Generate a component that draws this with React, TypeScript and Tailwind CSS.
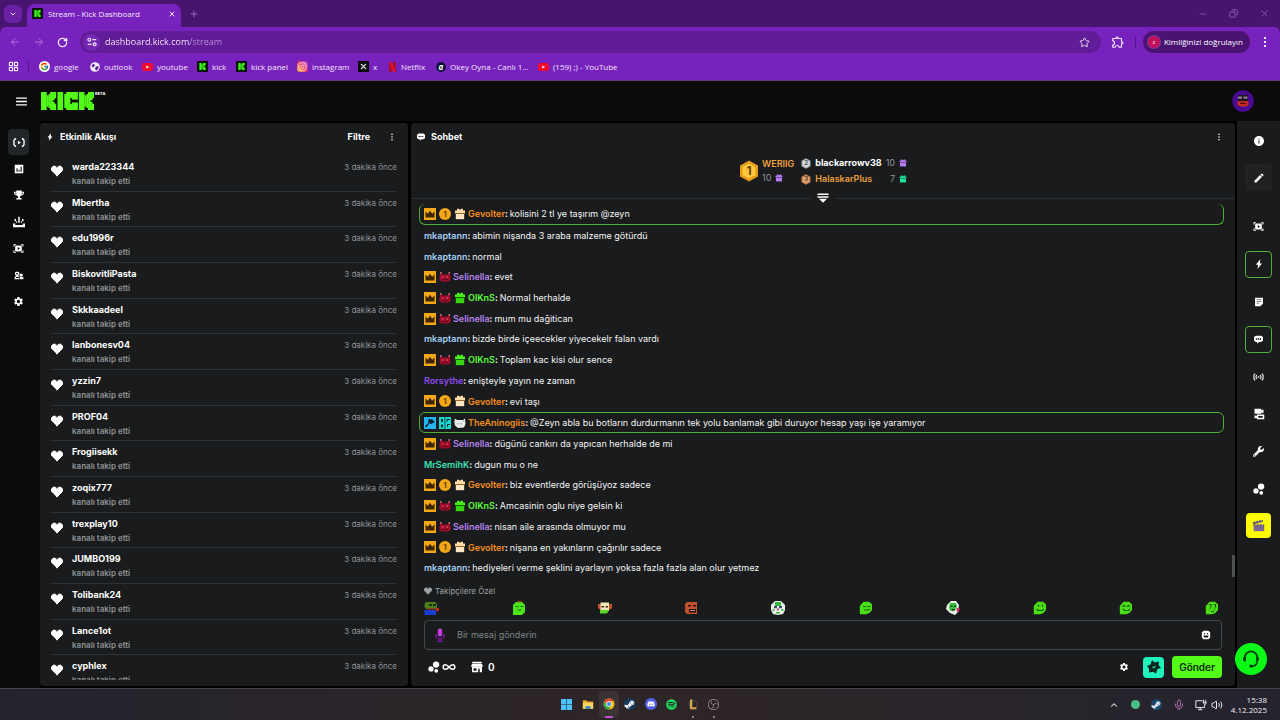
import type { ReactNode } from "react";
import {
  ArrowLeft,
  ArrowRight,
  ChevronDown,
  ChevronUp,
  Copy,
  Minus,
  Plus,
  RotateCw,
  Star,
  X,
  Infinity as InfinityIcon,
  Mic,
  Volume2,
  LayoutGrid,
} from "lucide-react";
import { FaDiscord, FaInstagram, FaSpotify, FaSteamSymbol, FaTrophy, FaWrench } from "react-icons/fa";
import { FcGoogle } from "react-icons/fc";
import { MdSettings, MdEdit, MdInfo, MdOutlineExtension } from "react-icons/md";
import { SiObsstudio } from "react-icons/si";

type IconProps = { className?: string };

const KBlocks = () => (
  <>
    <rect x="0" y="0" width="3" height="9" />
    <rect x="2.9" y="1.6" width="1.2" height="5.8" />
    <rect x="4" y="1" width="1.1" height="7" />
    <rect x="4.8" y="0" width="3.2" height="3.1" />
    <rect x="5" y="2.9" width="2.2" height="1.2" />
    <rect x="5" y="3.9" width="1.2" height="1.2" />
    <rect x="5" y="4.9" width="2.2" height="1.2" />
    <rect x="4.8" y="5.9" width="3.2" height="3.1" />
  </>
);

const KickMark = ({ className }: IconProps) => (
  <svg viewBox="0 0 14 14" className={className} aria-hidden="true">
    <rect width="14" height="14" rx="1" fill="#07140a" />
    <g transform="translate(3 2.5)" fill="#3df51a">
      <KBlocks />
    </g>
  </svg>
);

const KickLogo = () => (
  <svg viewBox="0 0 28 9" preserveAspectRatio="none" className="h-[18px] w-[53px]" fill="#53fc18" role="img" aria-label="Kick">
    <KBlocks />
    <rect x="8.7" y="0" width="3" height="9" />
    <g transform="translate(12.3 0)">
      <rect x="0" y="1" width="3.2" height="7" />
      <rect x="1" y="0" width="6.2" height="3" />
      <rect x="1" y="6" width="6.2" height="3" />
      <rect x="4" y="2.5" width="3.2" height="1.3" />
      <rect x="4" y="5.2" width="3.2" height="1.3" />
    </g>
    <g transform="translate(20 0)">
      <KBlocks />
    </g>
  </svg>
);

const Dots = ({ className }: IconProps) => (
  <svg viewBox="0 0 4 12" className={className} fill="currentColor" aria-hidden="true">
    <rect x="1" y="1" width="2" height="2" />
    <rect x="1" y="5" width="2" height="2" />
    <rect x="1" y="9" width="2" height="2" />
  </svg>
);

const Bolt = ({ className }: IconProps) => (
  <svg viewBox="0 0 12 16" className={className} fill="currentColor" aria-hidden="true">
    <path d="M8 .5 1 9h3.500L3.500 15.500 11 7H7.500z" />
  </svg>
);

const Heart = ({ className }: IconProps) => (
  <svg viewBox="0 0 12 12" className={className} fill="currentColor" aria-hidden="true">
    <path d="M1 1.5h1V.8h2.6v.8h.9v.9h1v-.9h.9V.8H10v.7h1v1h1v3.2h-1v1.2h-1v1H9v1H8v1H7v1H6.5L6 11.5 5 10.7v-1H4v-1H3v-1H2v-1H1V5.7H0V2.5h1z" />
  </svg>
);

const Bubble = ({ className }: IconProps) => (
  <svg viewBox="0 0 16 14" className={className} aria-hidden="true">
    <path d="M4 1h8l3 2v6l-3 2H9l-3 2.5V11H4L1 9V3z" fill="currentColor" />
    <path d="M4 5.2h2v2H4zM7 5.2h2v2H7zM10 5.2h2v2h-2z" fill="#191b1c" />
  </svg>
);

const Broadcast = ({ className }: IconProps) => (
  <svg viewBox="0 0 16 12" className={className} fill="none" stroke="currentColor" strokeWidth="1.8" aria-hidden="true">
    <path d="M4.2 1H3L1.3 3v6L3 11h1.2M11.8 1H13l1.7 2v6L13 11h-1.2" />
    <path d="M6.5 3.5 10.5 6l-4 2.5z" fill="currentColor" stroke="none" />
  </svg>
);

const Antenna = ({ className }: IconProps) => (
  <svg viewBox="0 0 16 12" className={className} fill="none" stroke="currentColor" strokeWidth="1.6" aria-hidden="true">
    <path d="M3 1 1.2 3v6L3 11M13 1l1.8 2v6L13 11M5.6 3 4.4 4.5v3L5.6 9M10.4 3l1.2 1.5v3L10.4 9" />
    <path d="M7 4.8h2v2.4H7z" fill="currentColor" stroke="none" />
  </svg>
);

const Chart = ({ className }: IconProps) => (
  <svg viewBox="0 0 14 14" className={className} aria-hidden="true">
    <path d="M1 1h12v12H1z" fill="currentColor" />
    <path d="M3.5 6h1.5v5H3.5zM6.3 8h1.4v3H6.3zM9.2 4h1.6v7H9.2z" fill="#0a0b0b" />
  </svg>
);

const Drops = ({ className }: IconProps) => (
  <svg viewBox="0 0 16 16" className={className} fill="currentColor" aria-hidden="true">
    <path d="M7 1h2v8H7zM2 4h2v3H2zM12 4h2v3h-2zM4 7h1.5v2H4zM10.5 7H12v2h-1.500zM0 10h3v2h10v-2h3v5H0z" />
  </svg>
);

const ClipFrame = ({ className }: IconProps) => (
  <svg viewBox="0 0 16 14" className={className} aria-hidden="true">
    <path d="M1 4V1h3M12 1h3v3M15 10v3h-3M4 13H1v-3" fill="none" stroke="currentColor" strokeWidth="1.6" />
    <path d="M4 2.5h8l1.2 1.5v6L12 11.5H4L2.8 10V4z" fill="currentColor" />
    <path d="m6.8 4.8 3.5 2.2-3.5 2.2z" fill="#111" />
  </svg>
);

const People = ({ className }: IconProps) => (
  <svg viewBox="0 0 16 14" className={className} fill="currentColor" aria-hidden="true">
    <path fillRule="evenodd" d="M3 1h4l1.5 1.5v3L7 7v1h1.5v1.500H3V11h5v2H1V9l2-1V7L1.500 5.500v-3zm.8 1.800v2.400h2.400V2.800z" />
    <path d="M10 4h3l1 1v2.500L13 8.500h-3L9 7.500V5zM9 9.500h6V13H9z" />
  </svg>
);

const Note = ({ className }: IconProps) => (
  <svg viewBox="0 0 14 14" className={className} aria-hidden="true">
    <path d="M1.5 1h11v8.500L9 13H1.500z" fill="currentColor" />
    <path d="M3.500 3.800h7M3.500 6.200h7M3.500 8.600h4" stroke="#55585a" strokeWidth="1" />
  </svg>
);

const Cameras = ({ className }: IconProps) => (
  <svg viewBox="0 0 16 16" className={className} fill="currentColor" aria-hidden="true">
    <path d="M2 1h9v2l3-1v5l-3-1v1.500H2z" />
    <path d="M5 8.500h10V15H5v-2l-3 1V9.500l3 1zm2 2V13h6v-2.500z" fillRule="evenodd" />
  </svg>
);

const Points = ({ className }: IconProps) => (
  <svg viewBox="0 0 16 16" className={className} fill="currentColor" aria-hidden="true">
    <circle cx="10.8" cy="4.8" r="4.2" />
    <circle cx="4" cy="10.5" r="3.5" />
    <circle cx="11" cy="13" r="2.5" />
  </svg>
);

const Shop = ({ className }: IconProps) => (
  <svg viewBox="0 0 14 14" className={className} fill="currentColor" aria-hidden="true">
    <path d="M1.500 1h11v1.600h-11zM1.200 3.200h11.600L14 6.800H0z" />
    <path d="M1.200 6.500h11.600V13h-2.600V9H8.400v4H1.200zM3 8.500v2.800h3.400V8.500z" fillRule="evenodd" />
  </svg>
);

const Smiley = ({ className }: IconProps) => (
  <svg viewBox="0 0 12 12" className={className} aria-hidden="true">
    <path d="M3 1h6l2 2v6l-2 2H3L1 9V3z" fill="currentColor" />
    <path d="M3.5 3.500h1.400v1.700H3.500zM7.100 3.500h1.400v1.700H7.100zM3 6.600h6v1L8 9H4L3 7.600z" fill="#191b1c" />
  </svg>
);

const Clapper = ({ className }: IconProps) => (
  <svg viewBox="0 0 16 16" className={className} aria-hidden="true">
    <path d="M2 7h13v8H2z" fill="#7d6699" />
    <path d="M1 4 13 .8l.7 2.600L1.800 6.700z" fill="#54456b" />
    <path d="m4 3.200 1.800 2.400M7.500 2.300l1.800 2.400M11 1.300l1.700 2.300" stroke="#d8d0c0" strokeWidth="1" />
    <path d="M2 7h13v2H2z" fill="#54456b" />
    <path d="m4 9 1.500-2M8 9l1.500-2M12 9l1.500-2" stroke="#d8d0c0" strokeWidth="1" />
  </svg>
);

const Headset = ({ className }: IconProps) => (
  <svg viewBox="0 0 20 20" className={className} fill="none" stroke="#073b0a" strokeWidth="1.7" aria-hidden="true">
    <path d="M3.800 11V8.600a6.200 6.200 0 0 1 12.400 0V11" />
    <path d="M4.800 7.800H3.600C2.600 7.800 2 8.600 2 10s.6 2.500 1.600 2.500h1.200zM15.200 7.800h1.200c1 0 1.600.8 1.600 2.200s-.6 2.500-1.600 2.500h-1.200z" fill="#073b0a" stroke="none" />
    <path d="M16 12.500c0 3-2 4.600-5 4.600" />
    <circle cx="10" cy="17.1" r="1.6" fill="#073b0a" stroke="none" />
  </svg>
);

const GiftBox = ({ className }: IconProps) => (
  <svg viewBox="0 0 12 12" className={className} fill="currentColor" aria-hidden="true">
    <path d="M2.500.8h2.200L6 2.200 7.300.8h2.200v1.700h1.700v2.300H.8V2.500h1.700z" />
    <path d="M1.500 5.600h9v5.600h-9z" />
    <path d="M1 4.800h10v.7H1z" opacity=".55" />
  </svg>
);

/* Chat badges */
const CrownBadge = () => (
  <svg viewBox="0 0 12 12" className="size-3 shrink-0" aria-hidden="true">
    <rect width="12" height="12" fill="#f5a816" />
    <path d="M1.500 9.500v-6L3.800 5.800 6 2.800l2.200 3 2.300-2.300v6z" fill="#3d2504" />
  </svg>
);
const OneBadge = () => (
  <span className="flex size-3 shrink-0 items-center justify-center rounded-full bg-[#f5a816] text-[8px] leading-none font-bold text-[#6b3c05]">1</span>
);
const GiftBadge = ({ tone }: { tone: "cream" | "green" }) => (
  <svg viewBox="0 0 12 12" className="size-3 shrink-0" aria-hidden="true">
    <path d="M3 .8h2L6 2 7 .8h2v1.800h2v2.500H1V2.600h2z" fill={tone === "cream" ? "#ffdcaa" : "#4cf01c"} />
    <path d="M1.800 5.800h8.400v5.400H1.800z" fill={tone === "cream" ? "#fbe6c4" : "#36d411"} />
    <path d="M1 5h10v.9H1z" fill={tone === "cream" ? "#a86b28" : "#126607"} />
  </svg>
);
const MaskBadge = () => (
  <svg viewBox="0 0 12 12" className="size-3 shrink-0" aria-hidden="true">
    <path d="M1 2h2v1.500h6V2h2v3h.5v4.500H10v1H2v-1H.5V5H1z" fill="#a30d2b" />
    <path d="M1 1.200h1.500v1.300H1zM9.500 1.200H11v1.300H9.500z" fill="#d99aa5" />
    <path d="M3 5.500h1.300v1.100H3zM7.700 5.500H9v1.100H7.700z" fill="#e87a88" />
    <path d="M3 8h6v1H3z" fill="#5c0618" />
  </svg>
);
const ModBadge = () => (
  <svg viewBox="0 0 12 12" className="size-3 shrink-0" aria-hidden="true">
    <rect width="12" height="12" fill="#24b5f5" />
    <path d="m5 1.500 1.500 1.200L8 2l2.500 3-1 1.200-1.200-.2-1.300 1.200L5.500 6 2.500 10.500 1 9.200 4.800 5.500 4 4z" fill="#06202e" />
  </svg>
);
const OgBadge = () => (
  <svg viewBox="0 0 12 12" className="size-3 shrink-0" aria-hidden="true">
    <rect width="12" height="12" fill="#18d8d0" />
    <path d="M2 2h2v3H2zM7.500 2H11v1H8.500v2H7.500zM2 7.500h2v3H2zM8 7h3v1H9v2H8zM5.500 0h.8v12h-.8z" fill="#06343a" />
  </svg>
);
const CatBadge = () => (
  <svg viewBox="0 0 12 12" className="size-3 shrink-0" aria-hidden="true">
    <path d="M1 1.500 3 3h6l2-1.500.5 5.500L10 10.500 4 11 1 8.500.3 5z" fill="#e9ecec" />
    <path d="M3.500 6h1v1.500h-1zM6.500 6h1v1.500h-1zM8.500 3l1.500 1-.8 1z" fill="#8a9294" />
  </svg>
);

const badgeMap: Record<string, ReactNode> = {
  crown: <CrownBadge />,
  one: <OneBadge />,
  cream: <GiftBadge tone="cream" />,
  green: <GiftBadge tone="green" />,
  mask: <MaskBadge />,
  mod: <ModBadge />,
  og: <OgBadge />,
  cat: <CatBadge />,
};

const orange = "text-[#f7901e]";
const blue = "text-[#a5d0f5]";
const purple = "text-[#b583f0]";
const lime = "text-[#5dfa3c]";

type Message = { badges: string[]; user: string; tone: string; text: string; boxed?: boolean };

const gev = { badges: ["crown", "one", "cream"], user: "Gevolter", tone: orange };
const mk = { badges: [], user: "mkaptann", tone: blue };
const sel = { badges: ["crown", "mask"], user: "Selinella", tone: purple };
const olk = { badges: ["crown", "mask", "green"], user: "OlKnS", tone: lime };

const messages: Message[] = [
  { ...gev, text: "kolisini 2 tl ye taşırım @zeyn", boxed: true },
  { ...mk, text: "abimin nişanda 3 araba malzeme götürdü" },
  { ...mk, text: "normal" },
  { ...sel, text: "evet" },
  { ...olk, text: "Normal herhalde" },
  { ...sel, text: "mum mu dağitican" },
  { ...mk, text: "bizde birde içeecekler yiyecekelr falan vardı" },
  { ...olk, text: "Toplam kac kisi olur sence" },
  { badges: [], user: "Rorsythe", tone: "text-[#8f4df0]", text: "enişteyle yayın ne zaman" },
  { ...gev, text: "evi taşı" },
  {
    badges: ["mod", "og", "cat"],
    user: "TheAninogiis",
    tone: orange,
    text: "@Zeyn abla bu botların durdurmanın tek yolu banlamak gibi duruyor hesap yaşı işe yaramıyor",
    boxed: true,
  },
  { ...sel, text: "dügünü cankırı da yapıcan herhalde de mi" },
  { badges: [], user: "MrSemihK", tone: "text-[#3be0b4]", text: "dugun mu o ne" },
  { ...gev, text: "biz eventlerde görüşüyoz sadece" },
  { ...olk, text: "Amcasinin oglu niye gelsin ki" },
  { ...sel, text: "nisan aile arasında olmuyor mu" },
  { ...gev, text: "nişana en yakınların çağırılır sadece" },
  { ...mk, text: "hediyeleri verme şeklini ayarlayın yoksa fazla fazla alan olur yetmez" },
];

const followers = [
  "warda223344",
  "Mbertha",
  "edu1996r",
  "BiskovitliPasta",
  "Skkkaadeel",
  "lanbonesv04",
  "yzzin7",
  "PROF04",
  "Frogiisekk",
  "zoqix777",
  "trexplay10",
  "JUMBO199",
  "Tolibank24",
  "Lance1ot",
  "cyphlex",
];

/* Emotes */
const Blob = ({ children }: { children: ReactNode }) => (
  <svg viewBox="0 0 14 14" className="size-[14px]" aria-hidden="true">
    <path d="M4.500 .8H10l3 2.500V9l-2.500 3L7 13.200H.8V5z" fill="#4ade16" />
    {children}
  </svg>
);

const emotes: { name: string; art: ReactNode }[] = [
  {
    name: "frog",
    art: (
      <svg viewBox="0 0 16 14" className="h-[14px] w-4" aria-hidden="true">
        <path d="M2 1h9l2 2v5H2L.5 6V3z" fill="#4d7d1c" />
        <path d="M5 3h3v2H5zM9 3h3v2H9z" fill="#182c0c" />
        <path d="M4 7h7v1.500H4z" fill="#8a3a1e" />
        <path d="M.5 9H12v5H.5z" fill="#1a3fd0" />
        <path d="M12 7h3v3h-3z" fill="#c22a1b" />
      </svg>
    ),
  },
  {
    name: "slime",
    art: (
      <svg viewBox="0 0 14 16" className="h-4 w-[14px]" aria-hidden="true">
        <path d="M4 2h6l3 3v7l-3 3H1V5z" fill="#4ae61a" />
        <path d="M5 .8h5v1.400H5z" fill="#7a3c14" />
        <path d="M3.500 6.500h3M8.500 6.500h3M5.500 10h3.500" stroke="#176a08" strokeWidth="1.2" />
      </svg>
    ),
  },
  {
    name: "burger",
    art: (
      <svg viewBox="0 0 14 14" className="size-[14px]" aria-hidden="true">
        <path d="M0 3h14v4l-2 1.500H2L0 7z" fill="#c4512c" />
        <path d="M2.500 1.500h8.500V10H2.500z" fill="#f2e7b8" />
        <path d="M3.500 5h2.500v1.500H3.500zM7.500 5H10v1.500H7.500z" fill="#4a2318" />
        <path d="M2 9h9l-2 3.500H2z" fill="#58d32b" />
      </svg>
    ),
  },
  {
    name: "angry",
    art: (
      <svg viewBox="0 0 14 14" className="size-[14px]" aria-hidden="true">
        <path d="M3 1h10v12H3L1 11V3z" fill="#c4512f" />
        <path d="M4 4h3v1.500H4zM9 4h3v1.500H9zM5 8h7v3.500H5z" fill="#2b0d08" />
        <path d="M6 9.200h5v.8H6z" fill="#d8b0a0" />
      </svg>
    ),
  },
  {
    name: "clown",
    art: (
      <svg viewBox="0 0 16 16" className="size-4" aria-hidden="true">
        <path d="M5 1h6l4 4v5l-2 4-5 1-5-1-2-4V5z" fill="#eef2ea" />
        <path d="M5 2h6v4H5zM2.500 9h2v2h-2zM11.500 9h2v2h-2zM6 12h4v1.500H6z" fill="#35b93a" />
        <path d="M4 6h3v2.200H4zM9 6h3v2.200H9z" fill="#3b4a66" />
        <path d="M7 8.500h2v1.800H7z" fill="#c93a7a" />
      </svg>
    ),
  },
  { name: "smirk", art: <Blob><path d="M4 5.500h3M8.500 5.500h3M5 9h4.500l1-1" stroke="#145c07" strokeWidth="1.2" fill="none" /></Blob> },
  {
    name: "rage",
    art: (
      <svg viewBox="0 0 16 16" className="size-4" aria-hidden="true">
        <path d="M6 1h5l3 4-1 7-3 3-5-2-4-4 1-4z" fill="#eef2ea" />
        <path d="M5 3h6l1 4-3 4H5L4 7z" fill="#35c23a" />
        <path d="M5.500 5.500h2v1.500h-2zM9 5.500h2v1.500H9zM7 9h3v1.500H7z" fill="#133f14" />
        <path d="M11.500 8h3v3.500h-3z" fill="#c8326a" />
      </svg>
    ),
  },
  { name: "grin", art: <Blob><path d="M5.500 3.800v2M9.500 3.800v2M3.500 8 5 9.500h4.500L11 8" stroke="#145c07" strokeWidth="1.2" fill="none" /></Blob> },
  { name: "happy", art: <Blob><path d="M3.500 5.500 5 4.500l1.500 1M8 5.500l1.500-1 1.500 1M4 8l1.500 1.500h4L11 8" stroke="#145c07" strokeWidth="1.1" fill="none" /></Blob> },
  { name: "think", art: <Blob><path d="M4 3.500h2V6H5M8.500 3.500h2V6h-1M5 7.500v1M9.500 7.500v1M6 10.500h3" stroke="#145c07" strokeWidth="1.1" fill="none" /></Blob> },
];

const YoutubeIcon = () => (
  <svg viewBox="0 0 14 10" className="h-2 w-[11px]" aria-hidden="true">
    <rect width="14" height="10" rx="2.5" fill="#f00a2e" />
    <path d="m5.500 3 3.500 2-3.500 2z" fill="#fff" />
  </svg>
);

const bookmarks: { label: string; icon: ReactNode; width: string }[] = [
  { label: "google", width: "w-[51px]", icon: <span className="rounded-full bg-white p-px"><FcGoogle className="size-[9px]" /></span> },
  {
    label: "outlook",
    width: "w-[52px]",
    icon: (
      <svg viewBox="0 0 12 12" className="size-[10px]" aria-hidden="true">
        <circle cx="6" cy="6" r="5.8" fill="#f5effa" />
        <path d="M2 3.500 5 2l1 2-1.500 2L3 6.500zM7 5.500l3-.5.5 2-2 3H7L6 8z" fill="#5b2494" />
      </svg>
    ),
  },
  { label: "youtube", width: "w-[55px]", icon: <YoutubeIcon /> },
  { label: "kick", width: "w-[39px]", icon: <KickMark className="size-[11px]" /> },
  { label: "kick panel", width: "w-[61px]", icon: <KickMark className="size-[11px]" /> },
  {
    label: "instagram",
    width: "w-[61px]",
    icon: (
      <span className="rounded-[3px] bg-linear-to-tr from-[#fdb833] via-[#f0325c] to-[#a52bd0] p-px text-white">
        <FaInstagram className="size-[9px]" />
      </span>
    ),
  },
  {
    label: "x",
    width: "w-[30px]",
    icon: (
      <span className="flex size-[11px] items-center justify-center bg-[#0b0b0d] text-[#dcdcdc]">
        <X className="size-[9px]" strokeWidth={3} />
      </span>
    ),
  },
  {
    label: "Netflix",
    width: "w-[48px]",
    icon: (
      <svg viewBox="0 0 10 12" className="h-[10px] w-[9px]" aria-hidden="true">
        <path d="M1 0h3v12H1zM6 0h3v12H6z" fill="#b00a1c" />
        <path d="M1 0h3l5 12H6z" fill="#e0142a" />
      </svg>
    ),
  },
  {
    label: "Okey Oyna - Canlı 1...",
    width: "w-[102px]",
    icon: <span className="flex size-[10px] items-center justify-center rounded-full bg-[#10123c] text-[8px] leading-none font-bold text-white italic">a</span>,
  },
  { label: "(159) ;) - YouTube", width: "w-[90px]", icon: <YoutubeIcon /> },
];

function BrowserChrome() {
  return (
    <header className="shrink-0 bg-[#47146f] font-['Open_Sans',sans-serif] text-[#f3e8fb]">
      <div className="flex h-[27px] items-end">
        <button aria-label="Search tabs" className="mb-1 ml-1 flex size-[18px] items-center justify-center rounded-md bg-[#6a21a5]">
          <ChevronDown className="size-2" strokeWidth={3} />
        </button>
        <div className="ml-[5px] flex h-[23px] w-[154px] items-center rounded-t-lg bg-[#7822bd] px-[5px] pb-1">
          <KickMark className="size-[11px]" />
          <span className="ml-[5px] text-[8px]">Stream - Kick Dashboard</span>
          <button aria-label="Close tab" className="ml-auto">
            <X className="size-2" strokeWidth={3} />
          </button>
        </div>
        <button aria-label="New tab" className="mb-2 ml-2 text-[#a478c8]">
          <Plus className="size-[10px]" />
        </button>
        <div className="mb-2 ml-auto flex gap-[21px] pr-[10px] text-[#9a70bd]">
          <button aria-label="Minimize"><Minus className="size-[10px]" strokeWidth={1.5} /></button>
          <button aria-label="Restore"><Copy className="size-[9px] -scale-x-100" strokeWidth={2} /></button>
          <button aria-label="Close"><X className="size-[11px]" strokeWidth={1.5} /></button>
        </div>
      </div>

      <div className="rounded-t-md border-b border-[#5e3a72] bg-[#7822bd]">
        <div className="flex h-[30px] items-center">
          <nav aria-label="History" className="flex items-center gap-3 pl-[9px]">
            <button aria-label="Back" className="text-[#ad72dc]"><ArrowLeft className="size-3" /></button>
            <button aria-label="Forward" className="text-[#ad72dc]"><ArrowRight className="size-3" /></button>
            <button aria-label="Reload"><RotateCw className="size-[11px]" strokeWidth={3} /></button>
          </nav>
          <div className="ml-3 flex h-[22px] min-w-0 flex-1 items-center rounded-full bg-[#611d97] pr-[11px] pl-[3px]">
            <button aria-label="Site information" className="flex size-[17px] items-center justify-center rounded-full bg-[#7427b2]">
              <svg viewBox="0 0 12 12" className="size-[10px]" fill="none" stroke="currentColor" strokeWidth="1.4" aria-hidden="true">
                <circle cx="2.8" cy="3.2" r="1.7" />
                <circle cx="9.2" cy="8.8" r="1.7" />
                <path d="M6.500 3.200H11M1 8.800h4.500" />
              </svg>
            </button>
            <input
              aria-label="Address"
              defaultValue="dashboard.kick.com/stream"
              className="ml-[5px] min-w-0 flex-1 bg-linear-to-r from-[#fbf4ff] from-[85px] to-[#bb93da] to-[85px] bg-clip-text text-[9px] text-transparent outline-none"
            />
            <button aria-label="Bookmark"><Star className="size-[11px]" /></button>
          </div>
          <button aria-label="Extensions" className="ml-[10px]"><MdOutlineExtension className="size-[14px]" /></button>
          <span className="mr-[7px] ml-[10px] h-[11px] w-px bg-[#56168a]" />
          <button className="flex h-[22px] items-center gap-1 rounded-full bg-[#4a1373] pr-[7px] pl-[5px] text-[8px] font-medium text-white">
            <span className="flex size-3 items-center justify-center rounded-full bg-[#c0105a] text-[6px] ring-1 ring-[#7a3a8c]">z</span>
            Kimliğinizi doğrulayın
          </button>
          <button aria-label="Menu" className="mx-[13px]"><Dots className="h-3 w-1" /></button>
        </div>
        <nav aria-label="Bookmarks" className="flex h-[23px] items-center pb-1 pl-2 text-[8px]">
          <LayoutGrid className="size-[11px]" strokeWidth={2.5} />
          <span className="ml-[9px] h-[11px] w-px bg-[#56168a]" />
          <div className="flex pl-[10px]">
            {bookmarks.map((b) => (
              <a key={b.label} href="#" className={`flex shrink-0 items-center gap-1 whitespace-nowrap ${b.width}`}>
                {b.icon}
                {b.label}
              </a>
            ))}
          </div>
        </nav>
      </div>
    </header>
  );
}

function SideNav() {
  const items = [
    { label: "Yayın", icon: <Broadcast className="h-[9px] w-3" /> },
    { label: "Analiz", icon: <Chart className="size-[10px]" /> },
    { label: "Başarılar", icon: <FaTrophy className="size-[10px]" /> },
    { label: "Drops", icon: <Drops className="size-3" /> },
    { label: "Klipler", icon: <ClipFrame className="h-[9px] w-[11px]" /> },
    { label: "Topluluk", icon: <People className="h-[9px] w-[10px]" /> },
    { label: "Ayarlar", icon: <MdSettings className="size-[11px]" /> },
  ];
  return (
    <nav aria-label="Panel" className="w-10 shrink-0 pt-2 pl-2">
      <ul className="flex h-[186px] w-[21px] flex-col justify-between">
        {items.map((it, i) => (
          <li key={it.label}>
            <a
              href="#"
              aria-label={it.label}
              className={`flex h-[26px] items-center justify-center rounded-sm text-white ${i === 0 ? "bg-[#232628]" : ""}`}
            >
              {it.icon}
            </a>
          </li>
        ))}
      </ul>
    </nav>
  );
}

function ActivityFeed() {
  return (
    <section className="flex w-[368px] shrink-0 flex-col rounded-sm bg-[#191b1c] pb-[6px]">
      <div className="flex h-[27px] shrink-0 items-center pr-[14px] pl-[7px] text-[9px] font-bold">
        <Bolt className="h-2 w-[6px]" />
        <h2 className="ml-[7px]">Etkinlik Akışı</h2>
        <button className="ml-auto">Filtre</button>
        <button aria-label="Diğer" className="ml-5"><Dots className="h-2 w-1" /></button>
      </div>
      <div className="mt-[6px] min-h-0 flex-1 overflow-hidden">
        <ul className="grid h-[535px] auto-rows-fr pr-[11px] pl-[10px]">
          {followers.map((name) => (
            <li key={name} className="flex items-start border-b border-[#2e3133] pt-1">
              <Heart className="mt-[5px] ml-[1px] size-3 shrink-0" />
              <div className="ml-[9px] min-w-0 flex-1">
                <p className="text-[9px] leading-[14px] font-bold">{name}</p>
                <p className="text-[8px] leading-[14px] font-semibold text-[#8f9496]">kanalı takip etti</p>
              </div>
              <time className="text-[8px] leading-[14px] text-[#8f9496]">3 dakika önce</time>
            </li>
          ))}
        </ul>
      </div>
    </section>
  );
}

const Hex = ({ className, fill, edge, children }: IconProps & { fill: string; edge: string; children: ReactNode }) => (
  <span className={`grid shrink-0 place-items-center ${className}`}>
    <svg viewBox="0 0 20 22" className="col-start-1 row-start-1 size-full" aria-hidden="true">
      <path d="M10 .5 19 5.500v11L10 21.500 1 16.500v-11z" fill={edge} />
      <path d="M10 3.500 16.500 7v8L10 18.500 3.500 15V7z" fill={fill} />
    </svg>
    <span className="col-start-1 row-start-1 leading-none font-bold">{children}</span>
  </span>
);

function Leaderboard() {
  return (
    <div className="flex h-[42px] shrink-0 items-center justify-center gap-[7px] text-[9px]">
      <div className="flex items-center gap-[3px]">
        <Hex className="h-[22px] w-5 text-[12px] text-[#6b3d06]" fill="#fdc93c" edge="#e59a1c">1</Hex>
        <div className="leading-[14px]">
          <p className="font-semibold text-[#eda03c]">WERIIG</p>
          <p className="flex items-center gap-1 text-[#8f9496]">10 <GiftBox className="size-2 text-[#b77bf2]" /></p>
        </div>
      </div>
      <div className="grid grid-cols-[auto_auto] gap-x-1 leading-4">
        <p className="flex items-center gap-1 font-bold">
          <Hex className="h-[11px] w-[10px] text-[6px] text-[#555]" fill="#d9dcde" edge="#aeb2b5">2</Hex>
          blackarrowv38
        </p>
        <p className="flex items-center justify-end gap-1 text-[#8f9496]">10 <GiftBox className="size-2 text-[#b77bf2]" /></p>
        <p className="flex items-center gap-1 font-semibold text-[#eda03c]">
          <Hex className="h-[11px] w-[10px] text-[6px] text-[#6a3618]" fill="#e0a579" edge="#c27e4e">3</Hex>
          HalaskarPlus
        </p>
        <p className="flex items-center justify-end gap-1 text-[#8f9496]">7 <GiftBox className="size-2 text-[#1fe29a]" /></p>
      </div>
    </div>
  );
}

function Chat() {
  return (
    <section className="flex min-w-0 flex-1 flex-col rounded-sm bg-[#191b1c]">
      <div className="flex h-[27px] shrink-0 items-center pr-[14px] pl-[5px] text-[9px] font-bold">
        <Bubble className="h-2 w-[10px]" />
        <h2 className="ml-[5px]">Sohbet</h2>
        <button aria-label="Diğer" className="ml-auto"><Dots className="h-2 w-1" /></button>
      </div>
      <Leaderboard />
      <div className="flex h-3 shrink-0 items-center gap-[5px]">
        <span className="h-px flex-1 bg-[#2b2e30]" />
        <button aria-label="Genişlet" className="px-px">
          <svg viewBox="0 0 12 10" className="h-[10px] w-3" fill="#fff" aria-hidden="true">
            <path d="M.5.500h11v1.600H.5zM.5 3.200h11v1.600H.5zM2 5.800h8L6 9.800z" />
          </svg>
        </button>
        <span className="h-px flex-1 bg-[#2b2e30]" />
      </div>

      <div className="flex min-h-0 flex-1">
        <ol className="flex min-w-0 flex-1 flex-col justify-between pr-2 pb-[3px] pl-2 text-[9px]">
          {messages.map((m, i) => (
            <li
              key={i}
              className={`flex shrink-0 items-center rounded-md whitespace-nowrap ${
                m.boxed ? (i === 0 ? "h-[21px] border border-t-0 border-[#4fae34] px-1" : "h-[21px] border border-[#4fae34] px-1") : "h-5 px-[5px]"
              }`}
            >
              {m.badges.length > 0 && (
                <span className="mr-[2px] flex gap-[3px]">
                  {m.badges.map((b) => (
                    <span key={b}>{badgeMap[b]}</span>
                  ))}
                </span>
              )}
              <span className={`font-semibold ${m.tone}`}>{m.user}</span>
              <span className="mr-[2px] font-semibold">:</span>
              <span className="text-[#f4f5f5]">{m.text}</span>
            </li>
          ))}
        </ol>
        <div className="flex w-[3px] items-end pb-1">
          <span className="h-[22px] w-full bg-[#4e5152]" />
        </div>
      </div>

      <div className="shrink-0 px-[13px] pb-2">
        <p className="flex h-5 items-center gap-[3px] text-[8px] text-[#9ea3a5]">
          <Heart className="size-2" /> Takipçilere Özel
        </p>
        <div className="-mt-px flex h-[15px] items-center justify-between pr-[3px]">
          {emotes.map((e) => (
            <button key={e.name} aria-label={e.name}>{e.art}</button>
          ))}
        </div>
        <div className="mt-[5px] flex h-[30px] items-center rounded-sm border border-[#45484a] pr-[10px] pl-[10px]">
          <svg viewBox="0 0 10 14" className="h-[14px] w-[10px] shrink-0" aria-hidden="true">
            <rect x="2.8" y="0.5" width="4.4" height="8" rx="2.2" fill="#c03be0" />
            <path d="M1 6v1.500C1 9.500 2.800 11 5 11s4-1.500 4-3.500V6M5 11v2.200M2.500 13.300h5" stroke="#8416a8" strokeWidth="1.3" fill="none" />
          </svg>
          <input
            aria-label="Mesaj"
            placeholder="Bir mesaj gönderin"
            className="ml-3 min-w-0 flex-1 bg-transparent text-[9px] outline-none placeholder:text-[#7f8486]"
          />
          <button aria-label="İfade ekle"><Smiley className="size-[10px]" /></button>
        </div>
        <div className="mt-[6px] flex h-[22px] items-center pl-1 text-[10px] font-semibold">
          <button aria-label="Kanal puanları" className="flex items-center gap-[2px]">
            <Points className="size-3" />
            <InfinityIcon className="size-[14px]" strokeWidth={2.5} />
          </button>
          <button className="ml-[15px] flex items-center gap-[5px]">
            <Shop className="size-3" />0
          </button>
          <button aria-label="Sohbet ayarları" className="mr-[14px] ml-auto"><MdSettings className="size-[10px]" /></button>
          <button aria-label="Hediye" className="mr-2 flex size-[21px] items-center justify-center rounded-sm bg-[#1ff2bd]">
            <svg viewBox="0 0 16 16" className="size-4" aria-hidden="true">
              <path d="m6 1 2.500 2.500L13 2.500 12.500 6l2.500 3-3.500 1L10 14.500l-3-1.700-4 .7V9.800L1 7l3.500-1.500z" fill="#06251d" />
              <path d="m6 8 1.500 1.500L10.500 7z" fill="#1ff2bd" />
            </svg>
          </button>
          <button className="h-[22px] rounded-sm bg-[#53fc18] px-[7px] text-[#0d2a07]">Gönder</button>
        </div>
      </div>
    </section>
  );
}

function ToolRail() {
  const top = "flex size-[27px] items-center justify-center rounded-sm";
  const tools = [
    { label: "Klip", icon: <ClipFrame className="h-[9px] w-[11px]" /> },
    { label: "Etkinlik", icon: <Bolt className="h-[10px] w-2" />, on: true },
    { label: "Notlar", icon: <Note className="size-[10px]" /> },
    { label: "Sohbet", icon: <Bubble className="h-[9px] w-[11px]" />, on: true },
    { label: "Yayın", icon: <Antenna className="h-2 w-[11px]" /> },
    { label: "Kameralar", icon: <Cameras className="size-3" /> },
    { label: "Araçlar", icon: <FaWrench className="size-[11px]" /> },
    { label: "Puanlar", icon: <Points className="size-3" /> },
    { label: "Klaket", icon: <Clapper className="size-[13px]" />, yellow: true },
  ];
  return (
    <aside className="flex w-[43px] shrink-0 flex-col items-center bg-[#191b1c] pt-[6px]">
      <button aria-label="Bilgi" className={top}><MdInfo className="size-3" /></button>
      <button aria-label="Düzenle" className={`${top} mt-[10px] bg-[#1f2123]`}><MdEdit className="size-3" /></button>
      <div className="mt-[22px] flex h-[325px] flex-col items-center justify-between">
        {tools.map((t) => (
          <button
            key={t.label}
            aria-label={t.label}
            className={`flex items-center justify-center rounded-sm ${
              t.on ? "size-[27px] border border-[#4fae34]" : t.yellow ? "size-[25px] bg-[#fbfb05]" : "size-[27px]"
            }`}
          >
            {t.icon}
          </button>
        ))}
      </div>
    </aside>
  );
}

const ChromeIcon = () => (
  <svg viewBox="0 0 24 24" className="size-3" aria-hidden="true">
    <circle cx="12" cy="12" r="11" fill="#fbbc04" />
    <path d="M2.500 6.500A11 11 0 0 1 21.500 6.500H12a5.500 5.500 0 0 0-4.800 8.200z" fill="#ea4335" />
    <path d="M2.500 6.500A11 11 0 0 0 12 23l4.800-8.300a5.500 5.500 0 0 1-9.600 0z" fill="#34a853" />
    <circle cx="12" cy="12" r="5.5" fill="#fff" />
    <circle cx="12" cy="12" r="4.2" fill="#4285f4" />
  </svg>
);

function Taskbar() {
  const apps: { label: string; icon: ReactNode; mark?: string; active?: boolean }[] = [
    {
      label: "Başlat",
      icon: (
        <svg viewBox="0 0 12 12" className="size-[11px]" fill="#4cc3fa" aria-hidden="true">
          <path d="M0 0h5.700v5.700H0zM6.300 0H12v5.700H6.300zM0 6.300h5.700V12H0zM6.300 6.300H12V12H6.300z" />
        </svg>
      ),
    },
    {
      label: "Dosyalar",
      icon: (
        <svg viewBox="0 0 14 12" className="h-[11px] w-3" aria-hidden="true">
          <path d="M1 1h4l1.500 1.500H13V11H1z" fill="#e7a828" />
          <path d="M1 4h12v7H1z" fill="#fbd563" />
          <path d="M4 8h6v3H4z" fill="#2f86c9" />
        </svg>
      ),
    },
    { label: "Chrome", icon: <ChromeIcon />, mark: "h-[2px] w-2 bg-[#c354d8]", active: true },
    { label: "Steam", icon: <span className="flex size-3 items-center justify-center rounded-full bg-[#16385a]"><FaSteamSymbol className="size-[11px] text-white" /></span> },
    { label: "Discord", icon: <span className="flex size-3 items-center justify-center rounded-full bg-[#5460e6]"><FaDiscord className="size-2 text-white" /></span> },
    { label: "Spotify", icon: <FaSpotify className="size-[11px] text-[#1ed760]" /> },
    {
      label: "League",
      icon: (
        <svg viewBox="0 0 12 12" className="size-[11px]" aria-hidden="true">
          <circle cx="6.5" cy="6" r="4.5" fill="none" stroke="#3a5266" strokeWidth="1" />
          <rect x="3.2" y="0.5" width="2.6" height="10" fill="#d3a84c" />
          <rect x="3.2" y="9" width="7" height="2.2" fill="#d3a84c" />
        </svg>
      ),
      mark: "size-[2px] bg-[#a6a2a8]",
    },
    { label: "OBS", icon: <SiObsstudio className="size-[11px] text-[#c5c2c7]" />, mark: "size-[2px] bg-[#a6a2a8]" },
  ];
  return (
    <footer className="grid h-8 shrink-0 grid-cols-[1fr_auto_1fr] items-center border-t border-[#47434a] bg-linear-to-r from-[#24232d] via-[#2e2526] to-[#24232e] font-['Open_Sans',sans-serif] text-[#f2f0f4]">
      <span />
      <div className="flex gap-px">
        {apps.map((a) => (
          <button
            key={a.label}
            aria-label={a.label}
            className={`flex h-[27px] w-[20px] flex-col items-center justify-end ${a.active ? "rounded-sm bg-[#3a3233]" : ""}`}
          >
            <span className="flex h-3 items-center">{a.icon}</span>
            <span className="mt-[5px] flex h-[3px] items-center">{a.mark && <span className={`rounded-full ${a.mark}`} />}</span>
          </button>
        ))}
      </div>
      <div className="flex items-center justify-end pr-[13px]">
        <button aria-label="Gizli simgeler"><ChevronUp className="size-[10px]" strokeWidth={2.5} /></button>
        <span className="ml-3 size-[9px] rounded-full bg-[#4cbf86]" />
        <span className="ml-[11px] flex size-[11px] items-center justify-center rounded-full bg-[#16486e]"><FaSteamSymbol className="size-[10px]" /></span>
        <Mic className="ml-[11px] size-3 text-[#a66bb0]" />
        <svg viewBox="0 0 14 14" className="ml-[10px] size-3" fill="none" stroke="currentColor" strokeWidth="1.1" aria-hidden="true">
          <path d="M9 2H1v8h10V7M3.500 12.500h5M6 10v2.500M10 1v3M12.500 1v3M9.500 4h3.500v1.500l-1.700 1z" />
        </svg>
        <Volume2 className="ml-1 size-3" />
        <p className="ml-2 text-right text-[8px] leading-[10px]">
          15:38
          <br />
          4.12.2025
        </p>
      </div>
    </footer>
  );
}

export default function App() {
  return (
    <div className="flex h-screen flex-col overflow-hidden bg-black font-['Inter',sans-serif] text-white">
      <BrowserChrome />
      <div className="flex h-10 shrink-0 items-center bg-[#0a0b0a] pr-[26px] pl-4">
        <button aria-label="Menü">
          <svg viewBox="0 0 12 10" className="h-[9px] w-[11px]" fill="#fff" aria-hidden="true">
            <path d="M0 .5h12V2H0zM0 4.200h12v1.500H0zM0 8h12v1.500H0z" />
          </svg>
        </button>
        <a href="#" className="ml-[14px] flex items-start">
          <KickLogo />
          <span className="ml-px text-[4px] leading-[4px] font-bold">BETA</span>
        </a>
        <button aria-label="Profil" className="ml-auto">
          <svg viewBox="0 0 22 22" className="size-[22px]" aria-hidden="true">
            <circle cx="11" cy="11" r="10.8" fill="#4a0a94" />
            <path d="M6 5h10v7H6z" fill="#1d1420" />
            <path d="M6 6.500h4v2.200H6zM11.500 6.500h4v2.200h-4z" fill="#8a7d92" />
            <path d="M5.500 11h11v4l-2.500 1.500H8L5.500 15z" fill="#c22a25" />
            <path d="M8 12.800h6v1.200H8z" fill="#4a0c12" />
          </svg>
        </button>
      </div>
      <main className="flex min-h-0 flex-1 bg-[#0a0b0b]">
        <SideNav />
        <div className="flex min-w-0 flex-1 gap-[3px] bg-black pt-[2px] pr-[2px] pb-[2px]">
          <ActivityFeed />
          <Chat />
        </div>
        <ToolRail />
      </main>
      <Taskbar />
      <button aria-label="Destek" className="fixed right-[13px] bottom-[45px] flex size-8 items-center justify-center rounded-full bg-[#0cf816]">
        <Headset className="size-5" />
      </button>
    </div>
  );
}
